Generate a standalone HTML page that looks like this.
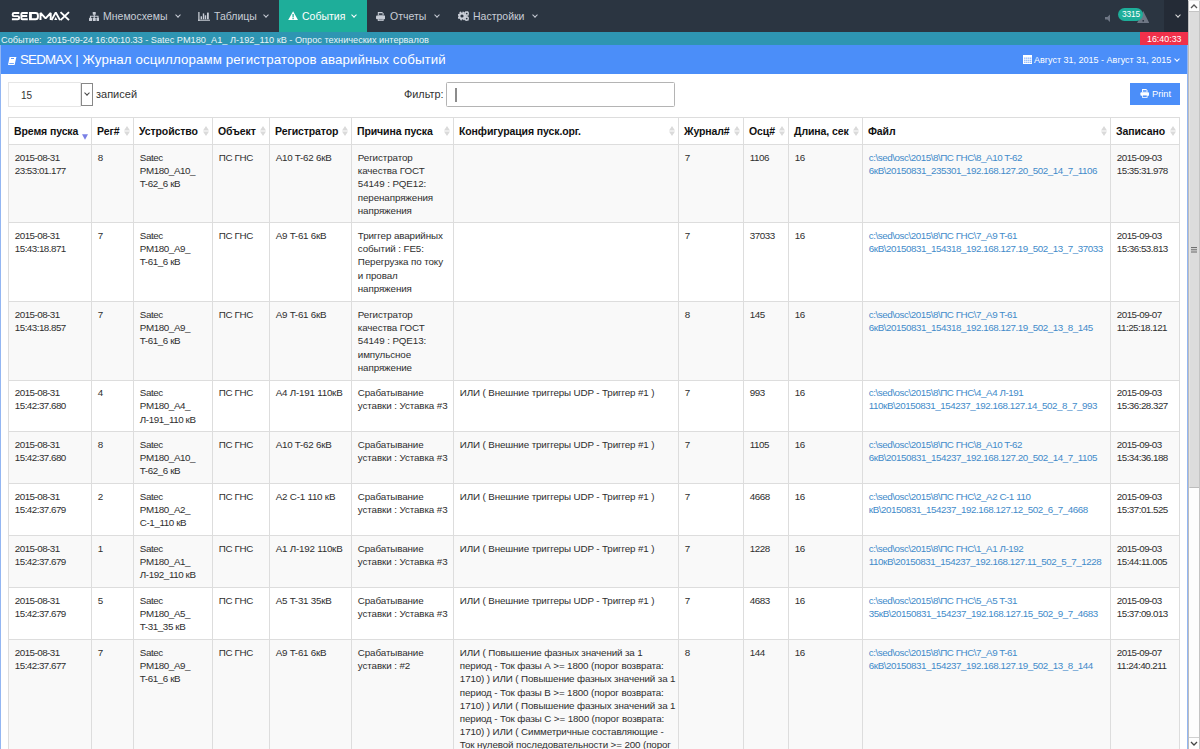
<!DOCTYPE html>
<html><head><meta charset="utf-8">
<style>
*{margin:0;padding:0;box-sizing:border-box}
html,body{width:1200px;height:749px;overflow:hidden;background:#fff;font-family:"Liberation Sans",sans-serif}
.a{position:absolute;white-space:nowrap}
#nav{position:absolute;left:0;top:0;width:1188px;height:32px;background:#2b3541}
.ni{position:absolute;top:9.2px;font-size:10.5px;line-height:14px;color:#c8cdd6}
.chev{position:absolute;width:4px;height:4px;border-right:1.3px solid #c8cdd6;border-bottom:1.3px solid #c8cdd6;transform:rotate(45deg)}
#ev{position:absolute;left:0;top:32px;width:1188px;height:13px;background:#2e95b2}
#panel{position:absolute;left:0;top:45px;width:1188px;height:720px;border-left:1px solid #93b6f2;border-right:1px solid #93b6f2}
#ph{position:absolute;left:1px;top:45px;width:1186px;height:29px;background:#4b8ef9}
.c{position:absolute;font-size:9.8px;line-height:13.2px;color:#2e2e2e;white-space:nowrap}
.h{position:absolute;font-size:10.5px;line-height:13.4px;color:#111;font-weight:bold;white-space:nowrap;letter-spacing:-0.1px}
.lk{color:#428bca}
.gv{position:absolute;width:1px;background:#dddddd}
.gh{position:absolute;height:1px;background:#dddddd}
.sort{position:absolute;width:6px;height:10px}
</style></head><body>

<div id="nav"></div>
<svg style="position:absolute;left:11px;top:11px" width="60" height="10" viewBox="0 0 60 10"><g fill="none" stroke="#fff" stroke-width="1.95" stroke-linejoin="miter"><path d="M8.3 1.9 H3.2 Q1.7 1.9 1.7 3.2 V3.9 Q1.7 5.1 3.2 5.1 H6.7 Q8.1 5.1 8.1 6.4 V7.0 Q8.1 8.2 6.7 8.2 H0.9"/><path d="M16.8 1.9 H11.4 Q10.4 1.9 10.4 3 V7.2 Q10.4 8.2 11.4 8.2 H16.8 M10.4 5.05 H16.2"/><path d="M19 1.9 H24.6 Q26.9 1.9 26.9 4.2 V5.9 Q26.9 8.2 24.6 8.2 H19 Z M19.9 1.9 V8.2"/><path d="M29.5 9.1 V1.9 L34.6 7.4 L39.7 1.9 V9.1" stroke-linejoin="bevel"/><path d="M40.5 9.1 L44.5 1.9 H45 L49 9.1"/><path d="M49.5 1.1 L58 9.1 M58 1.1 L49.5 9.1"/></g><path d="M44.75 6 L46.3 9.1 H43.2 Z" fill="#fff"/></svg>
<div id="tab" style="position:absolute;left:279px;top:0;width:88px;height:32px;background:#1eae9a"></div>
<div id="tab2" style="position:absolute;left:1164px;top:0;width:24px;height:32px;background:#242b36"></div>
<div class="ni" style="left:103px;color:#c8cdd6">Мнемосхемы</div>
<div class="chev" style="left:175.5px;top:13px;border-color:#c8cdd6"></div>
<div class="ni" style="left:214px;color:#c8cdd6">Таблицы</div>
<div class="chev" style="left:263.5px;top:13px;border-color:#c8cdd6"></div>
<div class="ni" style="left:302px;color:#fff">События</div>
<div class="chev" style="left:351.5px;top:13px;border-color:#fff"></div>
<div class="ni" style="left:390px;color:#c8cdd6">Отчеты</div>
<div class="chev" style="left:434.5px;top:13px;border-color:#c8cdd6"></div>
<div class="ni" style="left:473px;color:#c8cdd6">Настройки</div>
<div class="chev" style="left:532.5px;top:13px;border-color:#c8cdd6"></div>
<div class="chev" style="left:1176px;top:13px;border-color:#ddd"></div>
<div id="ev"></div>
<div class="a" style="left:1px;top:34px;font-size:9.2px;line-height:12px;color:#e8f4f8">Событие:&nbsp; <span style="letter-spacing:-0.1px">2015-09-24 16:00:10.33</span> - Satec PM180_A1_ Л-192_110 кВ - Опрос технических интервалов</div>
<div style="position:absolute;left:1140px;top:32px;width:48px;height:13px;background:#f0304a"></div>
<div class="a" style="left:1147px;top:33px;font-size:8.9px;line-height:12px;color:#fff">16:40:33</div>
<div id="panel"></div>
<div id="ph"></div>
<div class="a" style="left:20px;top:52px;font-size:13.3px;line-height:16px;color:#fff;letter-spacing:0.11px"><span style="letter-spacing:-0.8px">SEDMAX</span> | Журнал осциллорамм регистраторов аварийных событий</div>
<div class="a" style="left:1034px;top:54px;font-size:9px;line-height:12px;color:#fff">Август 31, 2015 - Август 31, 2015</div>
<div class="chev" style="left:1175px;top:57px;border-color:#fff"></div>
<div style="position:absolute;left:8px;top:82px;width:73px;height:25px;border:1px solid #e6e6e6;background:#fff"></div>
<div class="a" style="left:21px;top:90.3px;font-size:10px;line-height:12px;color:#333">15</div>
<div style="position:absolute;left:81px;top:83px;width:12px;height:23px;border:1px solid #888;background:#fff"></div>
<div class="chev" style="left:85px;top:91px;width:4px;height:4px;border-color:#444;border-width:0 1px 1px 0"></div>
<div class="a" style="left:96px;top:87.8px;font-size:11px;line-height:12px;color:#333">записей</div>
<div class="a" style="left:404px;top:88px;font-size:10.9px;line-height:12px;color:#333">Фильтр:</div>
<div style="position:absolute;left:446px;top:82px;width:229px;height:25px;border:1px solid #b4b4b4;border-radius:1.5px;background:#fff"></div>
<div style="position:absolute;left:455.2px;top:87.7px;width:1.5px;height:14px;background:#8c8c8c"></div>
<div style="position:absolute;left:1130px;top:83px;width:50px;height:22px;background:#4b8ef9"></div>
<div class="a" style="left:1152px;top:88px;font-size:9.3px;line-height:12px;color:#fff">Print</div>
<svg style="position:absolute;left:88.8px;top:11.8px" width="10.5" height="9" viewBox="0 0 21 18"><rect x="7.5" y="0" width="6" height="5.5" rx="0.8" fill="#c8cdd6"/><path d="M10.5 5 V9 M3 14 V8.5 H18 V14 M10.5 9 V14" stroke="#c8cdd6" stroke-width="2.2" fill="none"/><rect x="0" y="11.5" width="6" height="6.5" rx="1" fill="#c8cdd6"/><rect x="7.5" y="11.5" width="6" height="6.5" rx="1" fill="#c8cdd6"/><rect x="15" y="11.5" width="6" height="6.5" rx="1" fill="#c8cdd6"/></svg>
<svg style="position:absolute;left:198px;top:11.8px" width="12" height="9.2" viewBox="0 0 12 9.2"><rect x="0" y="0" width="1.7" height="9.2" fill="#c8cdd6" opacity="0.75"/><rect x="0" y="7.6" width="12" height="1.6" fill="#c8cdd6" opacity="0.75"/><rect x="2.6" y="4.3" width="1.4" height="3" fill="#c8cdd6"/><rect x="4.8" y="1.4" width="1.4" height="5.9" fill="#c8cdd6"/><rect x="6.8" y="3.3" width="1.4" height="4" fill="#c8cdd6"/><rect x="9" y="0.6" width="1.8" height="6.7" fill="#c8cdd6"/></svg>
<svg style="position:absolute;left:287.8px;top:11px" width="10.2" height="9.4" viewBox="0 0 10.2 9.4"><path d="M5.1 0.3 L10.2 9.4 L0 9.4 Z" fill="#fff"/><rect x="4.45" y="3" width="1.3" height="3.4" fill="#1eae9a"/><rect x="4.45" y="7" width="1.3" height="1.2" fill="#1eae9a"/></svg>
<svg style="position:absolute;left:375.7px;top:11.5px" width="9.4" height="9.4" viewBox="0 0 9.4 9.4"><path d="M1.8 0 H6.2 L7.6 1.4 V3.6 H1.8 Z" fill="#c8cdd6"/><rect x="2.8" y="1.3" width="3.8" height="1.6" fill="#2b3541"/><rect x="0" y="3.6" width="9.4" height="3.6" rx="1" fill="#c8cdd6"/><rect x="1.8" y="6" width="5.8" height="3.4" fill="#c8cdd6"/><rect x="2.6" y="6.9" width="4.2" height="1.6" fill="#8a919c"/></svg>
<svg style="position:absolute;left:457.6px;top:10.8px" width="11.4" height="10.2" viewBox="0 0 11.4 10.2"><circle cx="4" cy="5" r="2.6" fill="none" stroke="#c8cdd6" stroke-width="2"/><circle cx="4" cy="5" r="3.8" fill="none" stroke="#c8cdd6" stroke-width="1.6" stroke-dasharray="1.6 1.4"/><circle cx="8.7" cy="2.6" r="1.6" fill="none" stroke="#c8cdd6" stroke-width="1.4"/><circle cx="8.7" cy="7.6" r="1.6" fill="none" stroke="#c8cdd6" stroke-width="1.4"/><circle cx="8.7" cy="2.6" r="2.5" fill="none" stroke="#c8cdd6" stroke-width="0.9" stroke-dasharray="1 1"/><circle cx="8.7" cy="7.6" r="2.5" fill="none" stroke="#c8cdd6" stroke-width="0.9" stroke-dasharray="1 1"/></svg>
<svg style="position:absolute;left:1104.8px;top:14px" width="5.5" height="8.6" viewBox="0 0 5.5 8.6"><path d="M5.5 0 V8.6 L2.4 5.6 H0 V3 H2.4 Z" fill="#6e7684"/></svg>
<svg style="position:absolute;left:1137px;top:10.8px" width="12.4" height="12.2" viewBox="0 0 12.4 12.2"><path d="M6.2 0 L12.4 12.2 L0 12.2 Z" fill="#6e7684"/><rect x="5.5" y="9" width="1.5" height="1.6" fill="#2b3541"/></svg>
<div style="position:absolute;left:1117.8px;top:7.5px;width:25.5px;height:13.2px;border-radius:7px;background:#1eae9a"></div>
<div class="a" style="left:1122px;top:9.2px;font-size:8.3px;line-height:10px;color:#fff;letter-spacing:-0.1px">3315</div>
<svg style="position:absolute;left:7.8px;top:56.9px" width="9" height="8" viewBox="0 0 9 8"><path d="M1.6 0 H8.4 L7.6 3.4 L6.6 7.9 H0 L0.9 3.4 Z" fill="#fff"/><rect x="3" y="1.1" width="3" height="0.9" fill="#4b8ef9"/><rect x="1.3" y="6.2" width="4.6" height="0.8" fill="#4b8ef9"/></svg>
<svg style="position:absolute;left:1022.9px;top:53.8px" width="9.3" height="10.1" viewBox="0 0 9.3 10.1"><path d="M0 1 H9.3 V10.1 H0 Z" fill="#fff"/><g fill="#4b8ef9"><circle cx="0.2" cy="0.3" r="0.8"/><circle cx="4.65" cy="0.3" r="0.8"/><circle cx="9.1" cy="0.3" r="0.8"/><rect x="1.3" y="3.6" width="1.1" height="1.1"/><rect x="3.3" y="3.6" width="1.1" height="1.1"/><rect x="5.3" y="3.6" width="1.1" height="1.1"/><rect x="7.2" y="3.6" width="1.1" height="1.1"/><rect x="1.3" y="5.7" width="1.1" height="1.1"/><rect x="3.3" y="5.7" width="1.1" height="1.1"/><rect x="5.3" y="5.7" width="1.1" height="1.1"/><rect x="7.2" y="5.7" width="1.1" height="1.1"/><rect x="1.3" y="7.7" width="1.1" height="1.1"/><rect x="3.3" y="7.7" width="1.1" height="1.1"/><rect x="5.3" y="7.7" width="1.1" height="1.1"/><rect x="7.2" y="7.7" width="1.1" height="1.1"/></g></svg>
<svg style="position:absolute;left:1139.7px;top:89px" width="9.6" height="8.8" viewBox="0 0 9.4 9.4"><path d="M1.8 0 H6.2 L7.6 1.4 V3.6 H1.8 Z" fill="#fff"/><rect x="2.8" y="1.3" width="3.8" height="1.6" fill="#4b8ef9"/><rect x="0" y="3.6" width="9.4" height="3.6" rx="1" fill="#fff"/><rect x="1.8" y="6" width="5.8" height="3.4" fill="#fff"/><rect x="2.6" y="6.9" width="4.2" height="1.6" fill="#4b8ef9"/></svg>
<div style="position:absolute;left:8px;top:145px;width:1171px;height:77px;background:#f9f9f9"></div>
<div style="position:absolute;left:8px;top:302px;width:1171px;height:78px;background:#f9f9f9"></div>
<div style="position:absolute;left:8px;top:432px;width:1171px;height:51px;background:#f9f9f9"></div>
<div style="position:absolute;left:8px;top:536px;width:1171px;height:51px;background:#f9f9f9"></div>
<div style="position:absolute;left:8px;top:640px;width:1171px;height:120px;background:#f9f9f9"></div>
<div class="gv" style="left:8px;top:117px;height:632px"></div>
<div class="gv" style="left:91px;top:117px;height:632px"></div>
<div class="gv" style="left:133px;top:117px;height:632px"></div>
<div class="gv" style="left:212px;top:117px;height:632px"></div>
<div class="gv" style="left:269px;top:117px;height:632px"></div>
<div class="gv" style="left:351px;top:117px;height:632px"></div>
<div class="gv" style="left:453px;top:117px;height:632px"></div>
<div class="gv" style="left:678px;top:117px;height:632px"></div>
<div class="gv" style="left:743px;top:117px;height:632px"></div>
<div class="gv" style="left:788px;top:117px;height:632px"></div>
<div class="gv" style="left:862px;top:117px;height:632px"></div>
<div class="gv" style="left:1110px;top:117px;height:632px"></div>
<div class="gv" style="left:1179px;top:117px;height:632px"></div>
<div class="gh" style="left:8px;top:117px;width:1172px"></div>
<div class="gh" style="left:8px;top:144px;width:1172px"></div>
<div class="gh" style="left:8px;top:222px;width:1172px"></div>
<div class="gh" style="left:8px;top:301px;width:1172px"></div>
<div class="gh" style="left:8px;top:380px;width:1172px"></div>
<div class="gh" style="left:8px;top:431px;width:1172px"></div>
<div class="gh" style="left:8px;top:483px;width:1172px"></div>
<div class="gh" style="left:8px;top:535px;width:1172px"></div>
<div class="gh" style="left:8px;top:587px;width:1172px"></div>
<div class="gh" style="left:8px;top:639px;width:1172px"></div>
<div class="h" style="left:14px;top:124.5px">Время пуска</div>
<svg class="sort" style="left:81.5px;top:131.5px" width="6" height="5.5" viewBox="0 0 6 5.5"><path d="M0 0 L6 0 L3 5.5 Z" fill="#7a80e6"/></svg>
<div class="h" style="left:97px;top:124.5px">Рег#</div>
<svg class="sort" style="left:123.5px;top:126px" width="6.2" height="10.2" viewBox="0 0 6.2 10.2"><path d="M0 4.6 L3.1 0 L6.2 4.6 Z M0 5.6 L6.2 5.6 L3.1 10.2 Z" fill="#dadada"/></svg>
<div class="h" style="left:139px;top:124.5px">Устройство</div>
<svg class="sort" style="left:202.5px;top:126px" width="6.2" height="10.2" viewBox="0 0 6.2 10.2"><path d="M0 4.6 L3.1 0 L6.2 4.6 Z M0 5.6 L6.2 5.6 L3.1 10.2 Z" fill="#dadada"/></svg>
<div class="h" style="left:218px;top:124.5px">Объект</div>
<svg class="sort" style="left:259.5px;top:126px" width="6.2" height="10.2" viewBox="0 0 6.2 10.2"><path d="M0 4.6 L3.1 0 L6.2 4.6 Z M0 5.6 L6.2 5.6 L3.1 10.2 Z" fill="#dadada"/></svg>
<div class="h" style="left:275px;top:124.5px">Регистратор</div>
<svg class="sort" style="left:341.5px;top:126px" width="6.2" height="10.2" viewBox="0 0 6.2 10.2"><path d="M0 4.6 L3.1 0 L6.2 4.6 Z M0 5.6 L6.2 5.6 L3.1 10.2 Z" fill="#dadada"/></svg>
<div class="h" style="left:357px;top:124.5px">Причина пуска</div>
<svg class="sort" style="left:443.5px;top:126px" width="6.2" height="10.2" viewBox="0 0 6.2 10.2"><path d="M0 4.6 L3.1 0 L6.2 4.6 Z M0 5.6 L6.2 5.6 L3.1 10.2 Z" fill="#dadada"/></svg>
<div class="h" style="left:459px;top:124.5px">Конфигурация пуск.орг.</div>
<svg class="sort" style="left:668.5px;top:126px" width="6.2" height="10.2" viewBox="0 0 6.2 10.2"><path d="M0 4.6 L3.1 0 L6.2 4.6 Z M0 5.6 L6.2 5.6 L3.1 10.2 Z" fill="#dadada"/></svg>
<div class="h" style="left:684px;top:124.5px">Журнал#</div>
<svg class="sort" style="left:733.5px;top:126px" width="6.2" height="10.2" viewBox="0 0 6.2 10.2"><path d="M0 4.6 L3.1 0 L6.2 4.6 Z M0 5.6 L6.2 5.6 L3.1 10.2 Z" fill="#dadada"/></svg>
<div class="h" style="left:749px;top:124.5px">Осц#</div>
<svg class="sort" style="left:778.5px;top:126px" width="6.2" height="10.2" viewBox="0 0 6.2 10.2"><path d="M0 4.6 L3.1 0 L6.2 4.6 Z M0 5.6 L6.2 5.6 L3.1 10.2 Z" fill="#dadada"/></svg>
<div class="h" style="left:794px;top:124.5px">Длина, сек</div>
<svg class="sort" style="left:852.5px;top:126px" width="6.2" height="10.2" viewBox="0 0 6.2 10.2"><path d="M0 4.6 L3.1 0 L6.2 4.6 Z M0 5.6 L6.2 5.6 L3.1 10.2 Z" fill="#dadada"/></svg>
<div class="h" style="left:868px;top:124.5px">Файл</div>
<svg class="sort" style="left:1100.5px;top:126px" width="6.2" height="10.2" viewBox="0 0 6.2 10.2"><path d="M0 4.6 L3.1 0 L6.2 4.6 Z M0 5.6 L6.2 5.6 L3.1 10.2 Z" fill="#dadada"/></svg>
<div class="h" style="left:1116px;top:124.5px">Записано</div>
<svg class="sort" style="left:1169.5px;top:126px" width="6.2" height="10.2" viewBox="0 0 6.2 10.2"><path d="M0 4.6 L3.1 0 L6.2 4.6 Z M0 5.6 L6.2 5.6 L3.1 10.2 Z" fill="#dadada"/></svg>
<div class="c" style="left:14.8px;top:151px;letter-spacing:-0.52px">2015-08-31<br>23:53:01.177</div>
<div class="c" style="left:97.8px;top:151px;letter-spacing:-0.45px">8</div>
<div class="c" style="left:139.8px;top:151px;letter-spacing:-0.4px">Satec<br>PM180_A10_<br>T-62_6 кВ</div>
<div class="c" style="left:218.8px;top:151px;letter-spacing:-0.37px">ПС ГНС</div>
<div class="c" style="left:275.8px;top:151px;letter-spacing:-0.23px">A10 T-62 6кВ</div>
<div class="c" style="left:357.8px;top:151px;letter-spacing:-0.1px">Регистратор<br>качества ГОСТ<br>54149 : PQE12:<br>перенапряжения<br>напряжения</div>
<div class="c" style="left:684.8px;top:151px;letter-spacing:-0.45px">7</div>
<div class="c" style="left:749.8px;top:151px;letter-spacing:-0.45px">1106</div>
<div class="c" style="left:794.8px;top:151px;letter-spacing:-0.45px">16</div>
<div class="c" style="left:868.8px;top:151px;letter-spacing:-0.45px"><span class="lk">c:\sed\osc\2015\8\ПС ГНС\8_A10 T-62<br>6кВ\20150831_235301_192.168.127.20_502_14_7_1106</span></div>
<div class="c" style="left:1116.8px;top:151px;letter-spacing:-0.52px">2015-09-03<br>15:35:31.978</div>
<div class="c" style="left:14.8px;top:229px;letter-spacing:-0.52px">2015-08-31<br>15:43:18.871</div>
<div class="c" style="left:97.8px;top:229px;letter-spacing:-0.45px">7</div>
<div class="c" style="left:139.8px;top:229px;letter-spacing:-0.4px">Satec<br>PM180_A9_<br>T-61_6 кВ</div>
<div class="c" style="left:218.8px;top:229px;letter-spacing:-0.37px">ПС ГНС</div>
<div class="c" style="left:275.8px;top:229px;letter-spacing:-0.23px">A9 T-61 6кВ</div>
<div class="c" style="left:357.8px;top:229px;letter-spacing:-0.1px">Триггер аварийных<br>событий : FE5:<br>Перегрузка по току<br>и провал<br>напряжения</div>
<div class="c" style="left:684.8px;top:229px;letter-spacing:-0.45px">7</div>
<div class="c" style="left:749.8px;top:229px;letter-spacing:-0.45px">37033</div>
<div class="c" style="left:794.8px;top:229px;letter-spacing:-0.45px">16</div>
<div class="c" style="left:868.8px;top:229px;letter-spacing:-0.45px"><span class="lk">c:\sed\osc\2015\8\ПС ГНС\7_A9 T-61<br>6кВ\20150831_154318_192.168.127.19_502_13_7_37033</span></div>
<div class="c" style="left:1116.8px;top:229px;letter-spacing:-0.52px">2015-09-03<br>15:36:53.813</div>
<div class="c" style="left:14.8px;top:308px;letter-spacing:-0.52px">2015-08-31<br>15:43:18.857</div>
<div class="c" style="left:97.8px;top:308px;letter-spacing:-0.45px">7</div>
<div class="c" style="left:139.8px;top:308px;letter-spacing:-0.4px">Satec<br>PM180_A9_<br>T-61_6 кВ</div>
<div class="c" style="left:218.8px;top:308px;letter-spacing:-0.37px">ПС ГНС</div>
<div class="c" style="left:275.8px;top:308px;letter-spacing:-0.23px">A9 T-61 6кВ</div>
<div class="c" style="left:357.8px;top:308px;letter-spacing:-0.1px">Регистратор<br>качества ГОСТ<br>54149 : PQE13:<br>импульсное<br>напряжение</div>
<div class="c" style="left:684.8px;top:308px;letter-spacing:-0.45px">8</div>
<div class="c" style="left:749.8px;top:308px;letter-spacing:-0.45px">145</div>
<div class="c" style="left:794.8px;top:308px;letter-spacing:-0.45px">16</div>
<div class="c" style="left:868.8px;top:308px;letter-spacing:-0.45px"><span class="lk">c:\sed\osc\2015\8\ПС ГНС\7_A9 T-61<br>6кВ\20150831_154318_192.168.127.19_502_13_8_145</span></div>
<div class="c" style="left:1116.8px;top:308px;letter-spacing:-0.52px">2015-09-07<br>11:25:18.121</div>
<div class="c" style="left:14.8px;top:386.2px;letter-spacing:-0.52px">2015-08-31<br>15:42:37.680</div>
<div class="c" style="left:97.8px;top:386.2px;letter-spacing:-0.45px">4</div>
<div class="c" style="left:139.8px;top:386.2px;letter-spacing:-0.4px">Satec<br>PM180_A4_<br>Л-191_110 кВ</div>
<div class="c" style="left:218.8px;top:386.2px;letter-spacing:-0.37px">ПС ГНС</div>
<div class="c" style="left:275.8px;top:386.2px;letter-spacing:-0.23px">A4 Л-191 110кВ</div>
<div class="c" style="left:357.8px;top:386.2px;letter-spacing:-0.1px">Срабатывание<br>уставки : Уставка #3</div>
<div class="c" style="left:459.8px;top:386.2px;letter-spacing:-0.12px">ИЛИ ( Внешние триггеры UDP - Триггер #1 )</div>
<div class="c" style="left:684.8px;top:386.2px;letter-spacing:-0.45px">7</div>
<div class="c" style="left:749.8px;top:386.2px;letter-spacing:-0.45px">993</div>
<div class="c" style="left:794.8px;top:386.2px;letter-spacing:-0.45px">16</div>
<div class="c" style="left:868.8px;top:386.2px;letter-spacing:-0.45px"><span class="lk">c:\sed\osc\2015\8\ПС ГНС\4_A4 Л-191<br>110кВ\20150831_154237_192.168.127.14_502_8_7_993</span></div>
<div class="c" style="left:1116.8px;top:386.2px;letter-spacing:-0.52px">2015-09-03<br>15:36:28.327</div>
<div class="c" style="left:14.8px;top:438px;letter-spacing:-0.52px">2015-08-31<br>15:42:37.680</div>
<div class="c" style="left:97.8px;top:438px;letter-spacing:-0.45px">8</div>
<div class="c" style="left:139.8px;top:438px;letter-spacing:-0.4px">Satec<br>PM180_A10_<br>T-62_6 кВ</div>
<div class="c" style="left:218.8px;top:438px;letter-spacing:-0.37px">ПС ГНС</div>
<div class="c" style="left:275.8px;top:438px;letter-spacing:-0.23px">A10 T-62 6кВ</div>
<div class="c" style="left:357.8px;top:438px;letter-spacing:-0.1px">Срабатывание<br>уставки : Уставка #3</div>
<div class="c" style="left:459.8px;top:438px;letter-spacing:-0.12px">ИЛИ ( Внешние триггеры UDP - Триггер #1 )</div>
<div class="c" style="left:684.8px;top:438px;letter-spacing:-0.45px">7</div>
<div class="c" style="left:749.8px;top:438px;letter-spacing:-0.45px">1105</div>
<div class="c" style="left:794.8px;top:438px;letter-spacing:-0.45px">16</div>
<div class="c" style="left:868.8px;top:438px;letter-spacing:-0.45px"><span class="lk">c:\sed\osc\2015\8\ПС ГНС\8_A10 T-62<br>6кВ\20150831_154237_192.168.127.20_502_14_7_1105</span></div>
<div class="c" style="left:1116.8px;top:438px;letter-spacing:-0.52px">2015-09-03<br>15:34:36.188</div>
<div class="c" style="left:14.8px;top:490px;letter-spacing:-0.52px">2015-08-31<br>15:42:37.679</div>
<div class="c" style="left:97.8px;top:490px;letter-spacing:-0.45px">2</div>
<div class="c" style="left:139.8px;top:490px;letter-spacing:-0.4px">Satec<br>PM180_A2_<br>C-1_110 кВ</div>
<div class="c" style="left:218.8px;top:490px;letter-spacing:-0.37px">ПС ГНС</div>
<div class="c" style="left:275.8px;top:490px;letter-spacing:-0.23px">A2 C-1 110 кВ</div>
<div class="c" style="left:357.8px;top:490px;letter-spacing:-0.1px">Срабатывание<br>уставки : Уставка #3</div>
<div class="c" style="left:459.8px;top:490px;letter-spacing:-0.12px">ИЛИ ( Внешние триггеры UDP - Триггер #1 )</div>
<div class="c" style="left:684.8px;top:490px;letter-spacing:-0.45px">7</div>
<div class="c" style="left:749.8px;top:490px;letter-spacing:-0.45px">4668</div>
<div class="c" style="left:794.8px;top:490px;letter-spacing:-0.45px">16</div>
<div class="c" style="left:868.8px;top:490px;letter-spacing:-0.45px"><span class="lk">c:\sed\osc\2015\8\ПС ГНС\2_A2 C-1 110<br>кВ\20150831_154237_192.168.127.12_502_6_7_4668</span></div>
<div class="c" style="left:1116.8px;top:490px;letter-spacing:-0.52px">2015-09-03<br>15:37:01.525</div>
<div class="c" style="left:14.8px;top:542px;letter-spacing:-0.52px">2015-08-31<br>15:42:37.679</div>
<div class="c" style="left:97.8px;top:542px;letter-spacing:-0.45px">1</div>
<div class="c" style="left:139.8px;top:542px;letter-spacing:-0.4px">Satec<br>PM180_A1_<br>Л-192_110 кВ</div>
<div class="c" style="left:218.8px;top:542px;letter-spacing:-0.37px">ПС ГНС</div>
<div class="c" style="left:275.8px;top:542px;letter-spacing:-0.23px">A1 Л-192 110кВ</div>
<div class="c" style="left:357.8px;top:542px;letter-spacing:-0.1px">Срабатывание<br>уставки : Уставка #3</div>
<div class="c" style="left:459.8px;top:542px;letter-spacing:-0.12px">ИЛИ ( Внешние триггеры UDP - Триггер #1 )</div>
<div class="c" style="left:684.8px;top:542px;letter-spacing:-0.45px">7</div>
<div class="c" style="left:749.8px;top:542px;letter-spacing:-0.45px">1228</div>
<div class="c" style="left:794.8px;top:542px;letter-spacing:-0.45px">16</div>
<div class="c" style="left:868.8px;top:542px;letter-spacing:-0.45px"><span class="lk">c:\sed\osc\2015\8\ПС ГНС\1_A1 Л-192<br>110кВ\20150831_154237_192.168.127.11_502_5_7_1228</span></div>
<div class="c" style="left:1116.8px;top:542px;letter-spacing:-0.52px">2015-09-03<br>15:44:11.005</div>
<div class="c" style="left:14.8px;top:594px;letter-spacing:-0.52px">2015-08-31<br>15:42:37.679</div>
<div class="c" style="left:97.8px;top:594px;letter-spacing:-0.45px">5</div>
<div class="c" style="left:139.8px;top:594px;letter-spacing:-0.4px">Satec<br>PM180_A5_<br>T-31_35 кВ</div>
<div class="c" style="left:218.8px;top:594px;letter-spacing:-0.37px">ПС ГНС</div>
<div class="c" style="left:275.8px;top:594px;letter-spacing:-0.23px">A5 T-31 35кВ</div>
<div class="c" style="left:357.8px;top:594px;letter-spacing:-0.1px">Срабатывание<br>уставки : Уставка #3</div>
<div class="c" style="left:459.8px;top:594px;letter-spacing:-0.12px">ИЛИ ( Внешние триггеры UDP - Триггер #1 )</div>
<div class="c" style="left:684.8px;top:594px;letter-spacing:-0.45px">7</div>
<div class="c" style="left:749.8px;top:594px;letter-spacing:-0.45px">4683</div>
<div class="c" style="left:794.8px;top:594px;letter-spacing:-0.45px">16</div>
<div class="c" style="left:868.8px;top:594px;letter-spacing:-0.45px"><span class="lk">c:\sed\osc\2015\8\ПС ГНС\5_A5 T-31<br>35кВ\20150831_154237_192.168.127.15_502_9_7_4683</span></div>
<div class="c" style="left:1116.8px;top:594px;letter-spacing:-0.52px">2015-09-03<br>15:37:09.013</div>
<div class="c" style="left:14.8px;top:646px;letter-spacing:-0.52px">2015-08-31<br>15:42:37.677</div>
<div class="c" style="left:97.8px;top:646px;letter-spacing:-0.45px">7</div>
<div class="c" style="left:139.8px;top:646px;letter-spacing:-0.4px">Satec<br>PM180_A9_<br>T-61_6 кВ</div>
<div class="c" style="left:218.8px;top:646px;letter-spacing:-0.37px">ПС ГНС</div>
<div class="c" style="left:275.8px;top:646px;letter-spacing:-0.23px">A9 T-61 6кВ</div>
<div class="c" style="left:357.8px;top:646px;letter-spacing:-0.1px">Срабатывание<br>уставки : #2</div>
<div class="c" style="left:459.8px;top:646px;letter-spacing:-0.12px">ИЛИ ( Повышение фазных значений за 1<br>период - Ток фазы А &gt;= 1800 (порог возврата:<br>1710) ) ИЛИ ( Повышение фазных значений за 1<br>период - Ток фазы В &gt;= 1800 (порог возврата:<br>1710) ) ИЛИ ( Повышение фазных значений за 1<br>период - Ток фазы С &gt;= 1800 (порог возврата:<br>1710) ) ИЛИ ( Симметричные составляющие -<br>Ток нулевой последовательности &gt;= 200 (порог</div>
<div class="c" style="left:684.8px;top:646px;letter-spacing:-0.45px">8</div>
<div class="c" style="left:749.8px;top:646px;letter-spacing:-0.45px">144</div>
<div class="c" style="left:794.8px;top:646px;letter-spacing:-0.45px">16</div>
<div class="c" style="left:868.8px;top:646px;letter-spacing:-0.45px"><span class="lk">c:\sed\osc\2015\8\ПС ГНС\7_A9 T-61<br>6кВ\20150831_154237_192.168.127.19_502_13_8_144</span></div>
<div class="c" style="left:1116.8px;top:646px;letter-spacing:-0.52px">2015-09-07<br>11:24:40.211</div>
<div style="position:absolute;left:1188px;top:0;width:12px;height:749px;background:#fdfdfd;border-left:1px solid #bdbdbd;border-right:1px solid #c4c4c4"></div>
<div style="position:absolute;left:1188px;top:0;width:12px;height:1px;background:#e6e6e6"></div>
<div style="position:absolute;left:1189px;top:11px;width:10px;height:1px;background:#c4c4c4"></div>
<div style="position:absolute;left:1189px;top:12px;width:10px;height:476px;background:#dcdcdc;border-left:1px solid #e4e4e4;border-bottom:1px solid #bcbcbc"></div>
<div style="position:absolute;left:1189px;top:737px;width:10px;height:1px;background:#d0d0d0"></div>
<svg style="position:absolute;left:1190px;top:4px" width="8" height="5" viewBox="0 0 8 5"><path d="M1 4 L4 1 L7 4" stroke="#555" stroke-width="1.3" fill="none"/></svg>
<svg style="position:absolute;left:1190px;top:741px" width="8" height="5" viewBox="0 0 8 5"><path d="M1 1 L4 4 L7 1" stroke="#444" stroke-width="1.3" fill="none"/></svg>
<svg style="position:absolute;left:1191px;top:247px" width="6" height="6" viewBox="0 0 6 6"><path d="M0 0.6 H6 M0 2.8 H6 M0 5 H6" stroke="#666" stroke-width="1"/></svg>
</body></html>
